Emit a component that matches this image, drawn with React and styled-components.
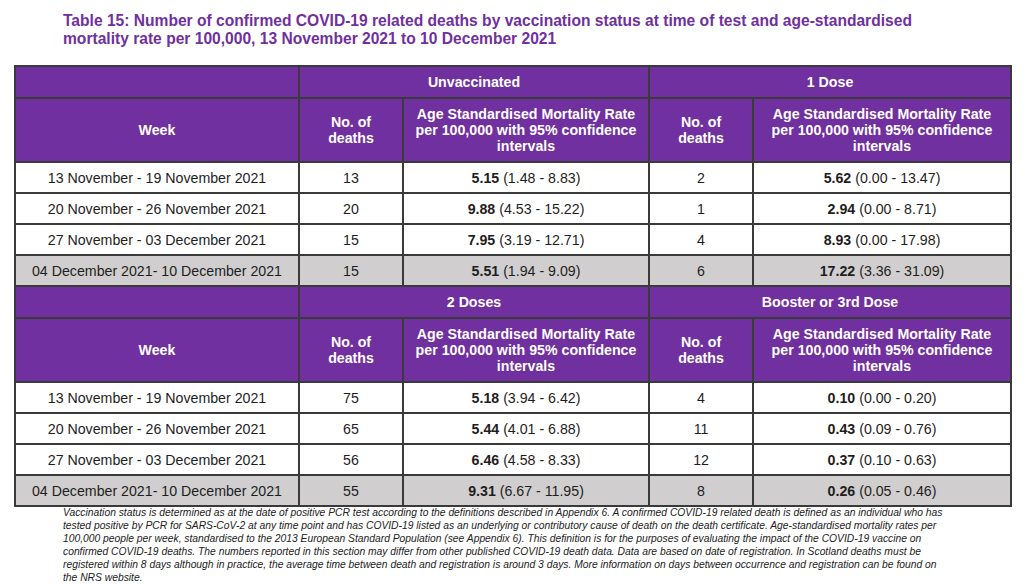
import styled, { createGlobalStyle } from 'styled-components'

const GlobalStyle = createGlobalStyle`
  html, body {
    margin: 0;
    padding: 0;
    background: #ffffff;
  }
  body {
    font-family: 'Liberation Sans', Arial, sans-serif;
  }
`

const sections = [
  {
    groups: ['Unvaccinated', '1 Dose'],
    rows: [
      ['13 November - 19 November 2021', '13', '5.15', '(1.48 - 8.83)', '2', '5.62', '(0.00 - 13.47)'],
      ['20 November - 26 November 2021', '20', '9.88', '(4.53 - 15.22)', '1', '2.94', '(0.00 - 8.71)'],
      ['27 November - 03 December 2021', '15', '7.95', '(3.19 - 12.71)', '4', '8.93', '(0.00 - 17.98)'],
      ['04 December 2021- 10 December 2021', '15', '5.51', '(1.94 - 9.09)', '6', '17.22', '(3.36 - 31.09)'],
    ],
  },
  {
    groups: ['2 Doses', 'Booster or 3rd Dose'],
    rows: [
      ['13 November - 19 November 2021', '75', '5.18', '(3.94 - 6.42)', '4', '0.10', '(0.00 - 0.20)'],
      ['20 November - 26 November 2021', '65', '5.44', '(4.01 - 6.88)', '11', '0.43', '(0.09 - 0.76)'],
      ['27 November - 03 December 2021', '56', '6.46', '(4.58 - 8.33)', '12', '0.37', '(0.10 - 0.63)'],
      ['04 December 2021- 10 December 2021', '55', '9.31', '(6.67 - 11.95)', '8', '0.26', '(0.05 - 0.46)'],
    ],
  },
]

const noteLines = [
  'Vaccination status is determined as at the date of positive PCR test according to the definitions described in Appendix 6. A confirmed COVID-19 related death is defined as an individual who has',
  'tested positive by PCR for SARS-CoV-2 at any time point and has COVID-19 listed as an underlying or contributory cause of death on the death certificate. Age-standardised mortality rates per',
  '100,000 people per week, standardised to the 2013 European Standard Population (see Appendix 6). This definition is for the purposes of evaluating the impact of the COVID-19 vaccine on',
  'confirmed COVID-19 deaths. The numbers reported in this section may differ from other published COVID-19 death data. Data are based on date of registration. In Scotland deaths must be',
  'registered within 8 days although in practice, the average time between death and registration is around 3 days. More information on days between occurrence and registration can be found on',
  'the NRS website.',
]

const RateHead = () => (
  <HeadCell>
    Age Standardised Mortality Rate<br />
    per 100,000 with 95% confidence<br />
    intervals
  </HeadCell>
)

const App = () => {
  return (
    <Page>
      <GlobalStyle />
      <Title>
        Table 15: Number of confirmed COVID-19 related deaths by vaccination status at time of test and age-standardised
        <br />
        mortality rate per 100,000, 13 November 2021 to 10 December 2021
      </Title>
      <Table>
        <colgroup>
          <col style={{width: 284}} />
          <col style={{width: 104}} />
          <col style={{width: 246}} />
          <col style={{width: 104}} />
          <col style={{width: 258}} />
        </colgroup>
        {sections.map((section, i) => (
          <tbody key={i}>
            <GroupRow>
              <HeadCell />
              <HeadCell colSpan={2}>{section.groups[0]}</HeadCell>
              <HeadCell colSpan={2}>{section.groups[1]}</HeadCell>
            </GroupRow>
            <LabelRow>
              <HeadCell>Week</HeadCell>
              <HeadCell>No. of<br />deaths</HeadCell>
              <RateHead />
              <HeadCell>No. of<br />deaths</HeadCell>
              <RateHead />
            </LabelRow>
            {section.rows.map((row, j) => (
              <DataRow key={j} $shaded={j === section.rows.length - 1}>
                <Cell>{row[0]}</Cell>
                <Cell>{row[1]}</Cell>
                <Cell><b>{row[2]}</b> {row[3]}</Cell>
                <Cell>{row[4]}</Cell>
                <Cell><b>{row[5]}</b> {row[6]}</Cell>
              </DataRow>
            ))}
          </tbody>
        ))}
      </Table>
      <Note>
        {noteLines.map((line, i) => (
          <NoteLine key={i}>{line}</NoteLine>
        ))}
      </Note>
    </Page>
  )
}

export default App

const Page = styled.div`
  width: 1024px;
  height: 585px;
  overflow: hidden;
  padding: 12px 0 0 14px;
  box-sizing: border-box;
`

const Title = styled.h1`
  margin: 0 0 17px 49px;
  font-size: 15.6px;
  line-height: 18px;
  font-weight: bold;
  white-space: nowrap;
  color: #7030a0;
`

const Table = styled.table`
  width: 996px;
  table-layout: fixed;
  border-collapse: collapse;
  border: 2px solid #3a3a3a;
  font-size: 14.2px;
  color: #1e1e1e;

  td {
    border: 2px solid #3a3a3a;
    text-align: center;
    padding: 0 4px;
    white-space: nowrap;
  }
`

const GroupRow = styled.tr`
  height: 32px;
`

const LabelRow = styled.tr`
  height: 64px;
`

const HeadCell = styled.td`
  background: #7030a0;
  color: #fff;
  font-weight: bold;
  line-height: 16px;
`

const DataRow = styled.tr`
  height: 31px;
  background: ${p => (p.$shaded ? '#d0cece' : '#fff')};
`

const Cell = styled.td`
  line-height: 16px;
`

const Note = styled.div`
  margin: -1px 0 0 49px;
  font-size: 10.3px;
  line-height: 13px;
  font-style: italic;
  color: #222;
`

const NoteLine = styled.div`
  white-space: nowrap;
`
